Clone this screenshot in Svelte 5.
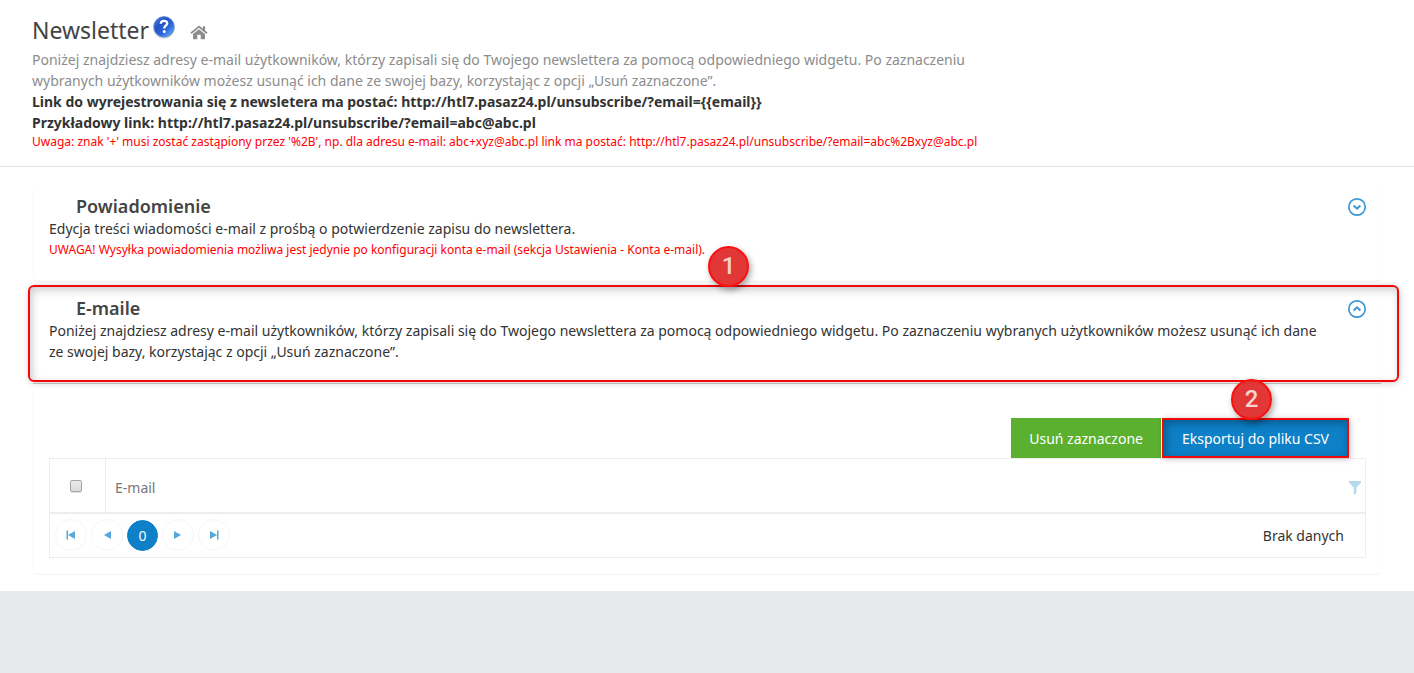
<script>
  let pageLabel = '0';
  let allSelected = $state(false);
</script>

<main>
  <header class="page-head">
    <div class="title-row">
      <h1>Newsletter</h1>
      <button class="icon help" aria-label="Pomoc">
        <svg width="24" height="24" viewBox="0 0 24 24">
          <defs>
            <linearGradient id="helpFill" x1="0" y1="0" x2="1" y2="1">
              <stop offset="0" stop-color="#4f83dc" />
              <stop offset="0.35" stop-color="#2453c6" />
              <stop offset="0.6" stop-color="#2a63d8" />
              <stop offset="1" stop-color="#6cc0ff" />
            </linearGradient>
          </defs>
          <circle cx="12" cy="12.6" r="10.9" fill="#c3cbd8" />
          <circle cx="12" cy="11.8" r="10.2" fill="url(#helpFill)" stroke="#5d84cc" stroke-width="0.8" />
          <path d="M8.800 8.800C8.900 6.700 10.200 5.900 12 5.900c2 0 3.200 1 3.200 2.600 0 2.200-3 2.300-3 4.900" fill="none" stroke="#fff" stroke-width="2.3" />
          <circle cx="12.200" cy="16.400" r="1.500" fill="#fff" />
        </svg>
      </button>
      <a class="icon home" href="#start" aria-label="Strona główna">
        <svg width="18" height="15" viewBox="0 0 18 15">
          <path d="M9 4.200 15 9v5.200h-4.300V9.800H7.300v4.400H3V9z" fill="#8c8c8c" />
          <path d="M1 8.300 9 1.600l8 6.700" fill="none" stroke="#8c8c8c" stroke-width="1.8" />
          <path d="M12.800 1.200h2.300v5.200l-2.300-2z" fill="#8c8c8c" />
        </svg>
      </a>
    </div>
    <div class="intro">
      <p class="muted">Poniżej znajdziesz adresy e-mail użytkowników, którzy zapisali się do Twojego newslettera za pomocą odpowiedniego widgetu. Po zaznaczeniu wybranych użytkowników możesz usunąć ich dane ze swojej bazy, korzystając z opcji „Usuń zaznaczone”.</p>
      <p class="strong">Link do wyrejestrowania się z newsletera ma postać: http://htl7.pasaz24.pl/unsubscribe/?email={'{{email}}'}</p>
      <p class="strong">Przykładowy link: http://htl7.pasaz24.pl/unsubscribe/?email=abc@abc.pl</p>
      <p class="warn">Uwaga: znak '+' musi zostać zastąpiony przez '%2B', np. dla adresu e-mail: abc+xyz@abc.pl link ma postać: http://htl7.pasaz24.pl/unsubscribe/?email=abc%2Bxyz@abc.pl</p>
    </div>
  </header>

  <div class="panels">
    <section class="panel notice">
      <div class="panel-title">
        <h2>Powiadomienie</h2>
        <button class="icon" aria-label="Rozwiń">
          <svg width="20" height="20" viewBox="0 0 20 20" fill="none" stroke="#3d97d3">
            <circle cx="10" cy="10" r="8.2" stroke-width="1.7" />
            <path d="m6.600 8.500 3.400 3.200 3.400-3.200" stroke-width="2" />
          </svg>
        </button>
      </div>
      <p>Edycja treści wiadomości e-mail z prośbą o potwierdzenie zapisu do newslettera.</p>
      <p class="warn">UWAGA! Wysyłka powiadomienia możliwa jest jedynie po konfiguracji konta e-mail (sekcja Ustawienia - Konta e-mail).</p>
    </section>

    <section class="panel">
      <div class="mails-head">
        <div class="panel-title">
          <h2>E-maile</h2>
          <button class="icon" aria-label="Zwiń">
            <svg width="20" height="20" viewBox="0 0 20 20" fill="none" stroke="#3d97d3">
              <circle cx="10" cy="10" r="8.2" stroke-width="1.7" />
              <path d="m6.600 11.500 3.400-3.200 3.400 3.200" stroke-width="2" />
            </svg>
          </button>
        </div>
        <p class="lead">Poniżej znajdziesz adresy e-mail użytkowników, którzy zapisali się do Twojego newslettera za pomocą odpowiedniego widgetu. Po zaznaczeniu wybranych użytkowników możesz usunąć ich dane ze swojej bazy, korzystając z opcji „Usuń zaznaczone”.</p>
        <div class="frame"></div>
        <span class="marker">1</span>
      </div>

      <div class="mails-body">
        <div class="actions">
          <button class="btn remove">Usuń zaznaczone</button>
          <div class="export-wrap">
            <button class="btn export">Eksportuj do pliku CSV</button>
            <span class="marker">2</span>
          </div>
        </div>
        <div class="grid">
          <table>
            <thead>
              <tr>
                <th class="check"><input type="checkbox" aria-label="Zaznacz wszystkie" bind:checked={allSelected} /></th>
                <th>
                  <div class="col-head">
                    <span>E-mail</span>
                    <button class="icon" aria-label="Filtruj">
                      <svg width="12" height="14" viewBox="0 0 12 14"><path d="M0 0h12v1.800L7.400 6.400V12L4.800 14V6.400L0 1.800z" fill="#b5daf0" /></svg>
                    </button>
                  </div>
                </th>
              </tr>
            </thead>
          </table>
          <nav class="pager" aria-label="Stronicowanie">
            <button class="page" aria-label="Pierwsza strona">
              <svg width="10" height="10" viewBox="0 0 10 10" fill="#55a7dc"><path d="M0.500 0.500H2v9H.5zM9 1v8L2 5z" /></svg>
            </button>
            <button class="page" aria-label="Poprzednia strona">
              <svg width="10" height="10" viewBox="0 0 10 10" fill="#55a7dc"><path d="M9 1v8L2 5z" /></svg>
            </button>
            <button class="page current">{pageLabel}</button>
            <button class="page" aria-label="Następna strona">
              <svg width="10" height="10" viewBox="0 0 10 10" fill="#55a7dc"><path d="M1 1v8l7-4z" /></svg>
            </button>
            <button class="page" aria-label="Ostatnia strona">
              <svg width="10" height="10" viewBox="0 0 10 10" fill="#55a7dc"><path d="M8 .5h1.500v9H8zM1 1v8l7-4z" /></svg>
            </button>
            <span class="empty">Brak danych</span>
          </nav>
        </div>
      </div>
    </section>
  </div>
</main>

<style>
  :global(body) {
    background: #e8e9ed;
  }
  main {
    background: #fff;
    font: 14px/21px 'Noto Sans', 'Open Sans', sans-serif;
    color: #333;
    padding-bottom: 16px;
  }
  h1, h2, p {
    margin: 0;
  }
  button {
    font: inherit;
    border: 0;
    cursor: pointer;
  }
  .icon {
    display: flex;
    padding: 0;
    background: none;
  }
  .page-head {
    padding: 12px 32px 16px;
    border-bottom: 1px solid #e3e3e3;
  }
  .title-row {
    display: flex;
    align-items: center;
    height: 37px;
  }
  h1 {
    font-size: 23px;
    line-height: 34px;
    font-weight: 400;
    color: #444;
    padding-bottom: 2px;
  }
  .help {
    margin: 0 14px 8px 3px;
  }
  .home {
    margin-top: 3px;
  }
  .intro {
    max-width: 990px;
  }
  .muted {
    color: #8c8c8c;
  }
  .strong {
    font-weight: 700;
  }
  .warn {
    color: #f00;
    font-size: 12px;
  }
  .intro .warn {
    line-height: 17px;
    white-space: nowrap;
  }
  .panels {
    display: flex;
    flex-direction: column;
    gap: 5px;
    padding: 19px 32px 0;
  }
  .panel {
    border: 1px solid #fcfcfc;
    border-top-color: #fff;
    border-bottom-color: #f2f2f2;
    border-radius: 6px;
  }
  .notice {
    padding: 8px 16px 21px;
  }
  .panel-title {
    display: flex;
    align-items: center;
    justify-content: space-between;
    padding: 0 0 0 27px;
    height: 23px;
  }
  h2 {
    font-size: 18px;
    line-height: 23px;
    font-weight: 600;
    color: #444;
  }
  .panel-title .icon {
    margin-right: -2px;
  }
  .mails-head {
    position: relative;
    padding: 9px 16px 21px;
    border-bottom: 1px solid #ccc;
  }
  .lead {
    max-width: 1280px;
  }
  .frame {
    position: absolute;
    inset: -3px -18px 1px -5px;
    border: 2px solid #f00a0a;
    border-radius: 6px;
    box-shadow: 1px 1px 6px rgba(0, 0, 0, 0.2), inset 2px 3px 9px rgba(0, 0, 0, 0.2);
    pointer-events: none;
  }
  .marker {
    position: absolute;
    left: 675px;
    top: -42px;
    box-sizing: border-box;
    width: 41px;
    height: 41px;
    border: 2px solid #fb1010;
    border-radius: 50%;
    background: rgba(224, 38, 38, 0.92);
    box-shadow: 2px 3px 6px rgba(0, 0, 0, 0.35);
    color: #f9d3d3;
    font: 500 24px/36px Roboto, sans-serif;
    text-align: center;
  }
  .mails-body {
    padding: 34px 15px 16px 16px;
  }
  .actions {
    display: flex;
    justify-content: flex-end;
    gap: 1px;
    padding-right: 17px;
  }
  .btn {
    height: 40px;
    padding: 0 18px;
    color: #fff;
  }
  .remove {
    background: #5bb030;
  }
  .export-wrap {
    position: relative;
  }
  .export {
    background: #0d80c8;
    border: 2px solid #f00a0a;
    box-shadow: 1px 1px 6px rgba(0, 0, 0, 0.25), inset 2px 3px 9px rgba(0, 0, 0, 0.3);
  }
  .export-wrap .marker {
    left: 69px;
    top: -39px;
  }
  .grid {
    border: 1px solid #ededed;
  }
  table {
    width: 100%;
    border-collapse: collapse;
    border-bottom: 2px solid #ededed;
  }
  th {
    height: 53px;
    padding: 0 4px 0 9px;
    font-weight: 400;
    text-align: left;
    color: #777;
  }
  .check {
    width: 52px;
    padding: 0 3px 0 0;
    border-right: 1px solid #ededed;
    text-align: center;
  }
  input {
    appearance: none;
    display: block;
    width: 12px;
    height: 12px;
    margin: 0 auto;
    border: 1px solid #a6a6a6;
    border-radius: 2px;
    background: linear-gradient(#e9e9e9, #dcdcdc);
    box-shadow: 0 1px 1px rgba(0, 0, 0, 0.12);
  }
  input:checked {
    background: #0d80c8;
  }
  .col-head {
    display: flex;
    align-items: center;
    justify-content: space-between;
    padding-top: 4px;
  }
  .pager {
    display: flex;
    align-items: center;
    gap: 4px;
    padding: 5px 21px 6px 5px;
  }
  .page {
    display: flex;
    align-items: center;
    justify-content: center;
    box-sizing: border-box;
    width: 32px;
    height: 32px;
    padding: 0;
    border: 1px solid #f6f6f6;
    border-radius: 50%;
    background: #fff;
  }
  .current {
    width: 31px;
    height: 31px;
    border-color: #0d80c8;
    background: #0d80c8;
    color: #fff;
  }
  .empty {
    margin-left: auto;
  }
</style>
